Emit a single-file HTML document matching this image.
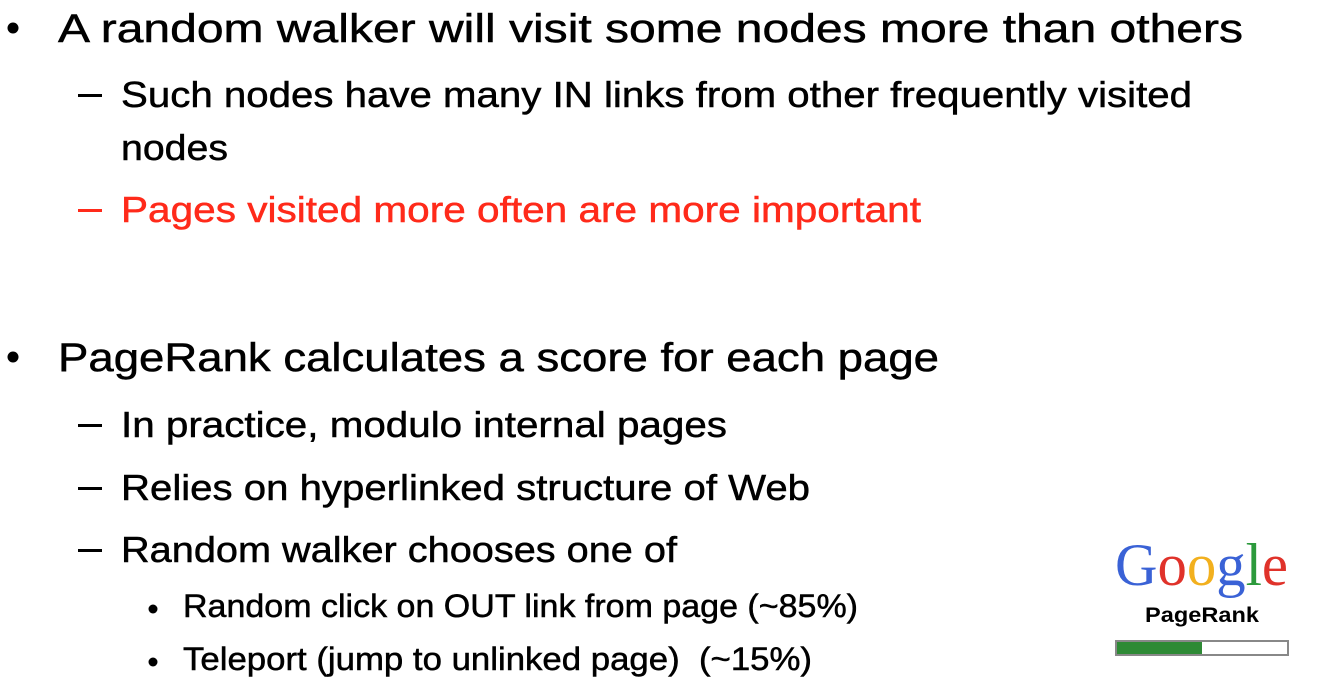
<!DOCTYPE html>
<html><head><meta charset="utf-8"><style>
html,body{margin:0;padding:0;background:#fff;}
svg{display:block;}
text{font-family:"Liberation Sans",sans-serif;fill:#000;}
.t{stroke:#000;stroke-width:0.5;}
</style></head><body>
<svg width="1321" height="689" viewBox="0 0 1321 689" xmlns="http://www.w3.org/2000/svg">
<circle cx="13" cy="28" r="5.5" fill="#000"/>
<text class="t" x="58" y="42" font-size="40" textLength="1185" lengthAdjust="spacingAndGlyphs">A random walker will visit some nodes more than others</text>
<rect x="78" y="94" width="24" height="3" fill="#000"/>
<text class="t" x="121" y="107" font-size="36" textLength="1071" lengthAdjust="spacingAndGlyphs">Such nodes have many IN links from other frequently visited</text>
<text class="t" x="121" y="160" font-size="36" textLength="107" lengthAdjust="spacingAndGlyphs">nodes</text>
<rect x="78" y="209" width="24" height="3" fill="#ff2a1a"/>
<text x="121" y="222" font-size="36" textLength="800" lengthAdjust="spacingAndGlyphs" style="fill:#ff2a1a;stroke:#ff2a1a;stroke-width:0.5">Pages visited more often are more important</text>
<circle cx="13" cy="357" r="5.5" fill="#000"/>
<text class="t" x="58" y="371" font-size="40" textLength="881" lengthAdjust="spacingAndGlyphs">PageRank calculates a score for each page</text>
<rect x="78" y="424" width="24" height="3" fill="#000"/>
<text class="t" x="121" y="437" font-size="36" textLength="606" lengthAdjust="spacingAndGlyphs">In practice, modulo internal pages</text>
<rect x="78" y="487" width="24" height="3" fill="#000"/>
<text class="t" x="121" y="500" font-size="36" textLength="689" lengthAdjust="spacingAndGlyphs">Relies on hyperlinked structure of Web</text>
<rect x="78" y="549" width="24" height="3" fill="#000"/>
<text class="t" x="121" y="562" font-size="36" textLength="556" lengthAdjust="spacingAndGlyphs">Random walker chooses one of</text>
<circle cx="153" cy="609" r="4.5" fill="#000"/>
<text class="t" x="183" y="617" font-size="32" textLength="675" lengthAdjust="spacingAndGlyphs">Random click on OUT link from page (~85%)</text>
<circle cx="153" cy="662" r="4.5" fill="#000"/>
<text class="t" x="183" y="670" font-size="32" textLength="629" lengthAdjust="spacingAndGlyphs" xml:space="preserve">Teleport (jump to unlinked page)  (~15%)</text>
<text x="1115" y="585" font-size="60" textLength="173" lengthAdjust="spacingAndGlyphs" style="font-family:'Liberation Serif',serif"><tspan style="fill:#3a62d6">G</tspan><tspan style="fill:#e0322a">o</tspan><tspan style="fill:#f2b01e">o</tspan><tspan style="fill:#3a62d6">g</tspan><tspan style="fill:#2c9a3c">l</tspan><tspan style="fill:#e0322a">e</tspan></text>
<text x="1145" y="622" font-size="21" font-weight="bold" textLength="114" lengthAdjust="spacingAndGlyphs">PageRank</text>
<rect x="1116" y="641" width="172" height="14" fill="#fff" stroke="#888" stroke-width="2"/>
<rect x="1117" y="642" width="85" height="12" fill="#2e8a35"/>
</svg>
</body></html>
